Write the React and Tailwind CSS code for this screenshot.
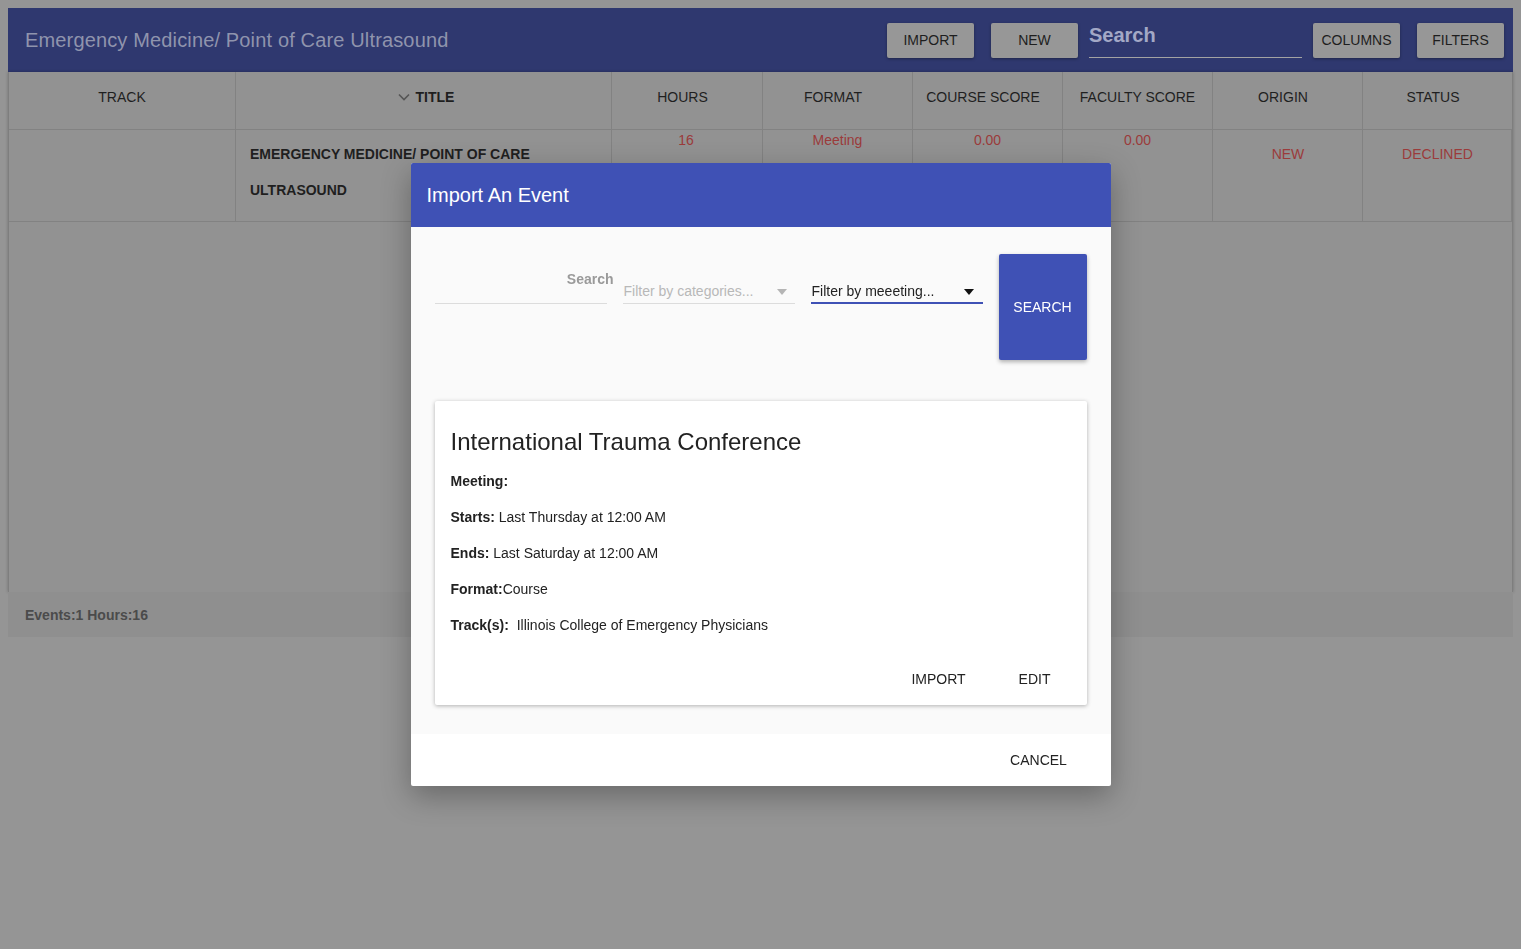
import React from 'react';

const columns = [
  { label: 'TRACK', w: 'w-[226px]', pad: '' },
  { label: 'TITLE', w: 'w-[376px]', sort: true, pad: 'pl-[5px]' },
  { label: 'HOURS', w: 'w-[151px]', pad: 'pr-[9px]' },
  { label: 'FORMAT', w: 'w-[150px]', pad: 'pr-[9px]' },
  { label: 'COURSE SCORE', w: 'w-[150px]', pad: 'pr-[9px]' },
  { label: 'FACULTY SCORE', w: 'w-[150px]', pad: '' },
  { label: 'ORIGIN', w: 'w-[150px]', pad: 'pr-[9px]' },
  { label: 'STATUS', w: 'w-[150px]', pad: 'pr-[9px]' },
];

const TopButton = ({ children, className = '' }) => (
  <button className={`h-[35px] w-[87px] rounded-[2px] bg-[#979797] text-[14px] text-[#1e1e1e] shadow-[0_1px_3px_rgba(0,0,0,0.35)] ${className}`}>
    {children}
  </button>
);

const Caret = ({ color }) => (
  <svg width="10" height="6" viewBox="0 0 10 6" className="shrink-0">
    <path d="M0 0 L10 0 L5 6 Z" fill={color} />
  </svg>
);

const App = () => {
  return (
    <div className="relative w-full min-h-[949px] bg-[#959595] pt-2 font-['Liberation_Sans',Arial,sans-serif]">
      {/* --- Page (dimmed behind the dialog) --- */}
      <div className="mx-2 w-[1505px]">
        <div className="flex h-16 items-center bg-[#2f386f] pl-[17px] pr-[9px]">
          <h1 className="flex-1 text-[20px] tracking-[0.15px] text-[#8f94ad]">Emergency Medicine/ Point of Care Ultrasound</h1>
          <TopButton>IMPORT</TopButton>
          <TopButton className="ml-[17px]">NEW</TopButton>
          <div className="ml-[11px] flex h-[35px] w-[213px] items-start border-b border-[#a3a3a3]">
            <span className="mt-[-3px] text-[20px] font-bold text-[#a3a8c6]">Search</span>
          </div>
          <TopButton className="ml-[11px]">COLUMNS</TopButton>
          <TopButton className="ml-[17px]">FILTERS</TopButton>
        </div>

        <div className="h-[520px] border-x border-[#7e7e7e] bg-[#929292] shadow-[0_0_3px_rgba(0,0,0,0.25)]">
          <div className="flex h-[58px] border-b border-[#828282]">
            {columns.map((c, i) => (
              <div
                key={c.label}
                className={`${c.w} ${c.pad} flex items-center justify-center gap-[6px] pb-[6px] text-[14px] text-[#1f1f1f] ${i > 0 ? 'border-l border-[#828282]' : ''}`}
              >
                {c.sort && (
                  <svg width="12" height="8" viewBox="0 0 12 8" className="mt-[-1px]">
                    <path d="M1 1.5 L6 6.5 L11 1.5" stroke="#555" strokeWidth="1.6" fill="none" />
                  </svg>
                )}
                <span className={c.sort ? 'font-bold' : ''}>{c.label}</span>
              </div>
            ))}
          </div>
          <div className="flex h-[92px] border-b border-[#828282] text-[14px]">
            <div className="w-[226px]" />
            <div className="w-[376px] border-l border-[#828282] pl-[14px] pt-[14px] font-bold leading-9 text-[#1f1f1f]">
              <div className="mt-[-8px]">EMERGENCY MEDICINE/ POINT OF CARE</div>
              <div>ULTRASOUND</div>
            </div>
            <div className="w-[151px] border-l border-[#828282] pr-[2px] text-center leading-5 text-[#9b3b3b]">16</div>
            <div className="w-[150px] border-l border-[#828282] text-center leading-5 text-[#9b3b3b]">Meeting</div>
            <div className="w-[150px] border-l border-[#828282] text-center leading-5 text-[#9b3b3b]">0.00</div>
            <div className="w-[150px] border-l border-[#828282] text-center leading-5 text-[#9b3b3b]">0.00</div>
            <div className="w-[150px] border-l border-[#828282] pl-[1px] pt-[14px] text-center leading-5 text-[#9b3b3b]">NEW</div>
            <div className="w-[150px] border-x border-[#828282] pl-[1px] pt-[14px] text-center leading-5 text-[#9b3b3b]">DECLINED</div>
          </div>
        </div>

        <div className="flex h-[45px] items-center bg-[#8f8f8f] pl-[17px] pt-[2px] text-[14px] font-bold text-[#4b4b4b]">
          Events:1 Hours:16
        </div>
      </div>

      {/* --- Import dialog --- */}
      <div className="fixed inset-0 flex items-center justify-center">
        <div className="w-[700px] overflow-hidden rounded-[2px] bg-white shadow-[0_10px_30px_rgba(0,0,0,0.3)]">
          <div className="flex h-16 items-center bg-[#3f51b5] px-4 text-[20px] text-white">Import An Event</div>

          <div className="bg-[#fafafa] px-6 pb-[29px] pt-[27px]">
            <div className="flex gap-4">
              <div className="relative h-[50px] w-[172px] border-b border-[#dcdcdc]">
                <span className="absolute right-[-7px] top-[15px] text-[14px] font-bold text-[#9a9a9a]">Search</span>
              </div>
              <div className="flex h-[50px] w-[172px] items-end border-b border-[#dcdcdc] pb-[1px]">
                <span className="flex-1 pl-[1px] text-[14px] text-[#b8b8b8]">Filter by categories...</span>
                <span className="mb-[7px] mr-[8px]"><Caret color="#b5b5b5" /></span>
              </div>
              <div className="flex h-[50px] w-[172px] items-end border-b-2 border-[#3f51b5]">
                <span className="flex-1 pl-[1px] text-[14px] text-[#222]">Filter by meeeting...</span>
                <span className="mb-[7px] mr-[9px]"><Caret color="#111" /></span>
              </div>
              <button className="h-[106px] w-[88px] rounded-[2px] bg-[#3f51b5] text-[14px] text-white shadow-[0_2px_4px_rgba(0,0,0,0.3)]">
                SEARCH
              </button>
            </div>

            <div className="mt-[41px] rounded-[2px] bg-white px-4 pb-2 pt-6 shadow-[0_1px_4px_rgba(0,0,0,0.3)]">
              <h2 className="h-[34px] text-[24px] leading-[34px] text-[#222]">International Trauma Conference</h2>
              <div className="mt-1 text-[14px] leading-9 text-[#222]">
                <div><b>Meeting:</b></div>
                <div><b>Starts:</b> Last Thursday at 12:00 AM</div>
                <div><b>Ends:</b> Last Saturday at 12:00 AM</div>
                <div><b>Format:</b>Course</div>
                <div><b>Track(s):</b>&nbsp; Illinois College of Emergency Physicians</div>
              </div>
              <div className="-mr-2 mt-[18px] flex justify-end gap-2">
                <button className="h-9 w-[88px] text-[14px] text-[#222]">IMPORT</button>
                <button className="h-9 w-[88px] text-[14px] text-[#222]">EDIT</button>
              </div>
            </div>
          </div>

          <div className="flex h-[52px] items-center justify-end pr-7">
            <button className="h-9 w-[88px] text-[14px] text-[#222]">CANCEL</button>
          </div>
        </div>
      </div>
    </div>
  );
};

export default App;
